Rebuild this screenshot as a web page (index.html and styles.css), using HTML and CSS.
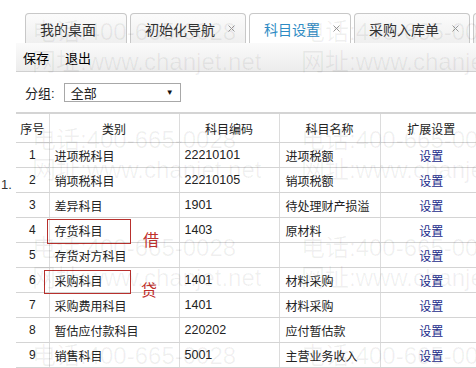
FILE: index.html
```html
<!DOCTYPE html>
<html lang="zh-CN">
<head>
  <meta charset="UTF-8">
  <title>科目设置</title>
  <link rel="stylesheet" href="styles.css">
</head>
<body>
  <div class="page">
    <!-- Tab bar -->
    <div class="tabs">
      <div class="tab">我的桌面<span class="close hidden"><svg width="7" height="7" viewBox="0 0 7 7"><path d="M0.5 0.5L6.5 6.5M6.5 0.5L0.5 6.5"/></svg></span></div>
      <div class="tab">初始化导航<span class="close"><svg width="7" height="7" viewBox="0 0 7 7"><path d="M0.5 0.5L6.5 6.5M6.5 0.5L0.5 6.5"/></svg></span></div>
      <div class="tab active">科目设置<span class="close"><svg width="7" height="7" viewBox="0 0 7 7"><path d="M0.5 0.5L6.5 6.5M6.5 0.5L0.5 6.5"/></svg></span></div>
      <div class="tab">采购入库单<span class="close"><svg width="7" height="7" viewBox="0 0 7 7"><path d="M0.5 0.5L6.5 6.5M6.5 0.5L0.5 6.5"/></svg></span></div>
      <div class="tab">销售出库单<span class="close"><svg width="7" height="7" viewBox="0 0 7 7"><path d="M0.5 0.5L6.5 6.5M6.5 0.5L0.5 6.5"/></svg></span></div>
    </div>

    <!-- Toolbar -->
    <div class="toolbar">
      <span class="tool">保存</span>
      <span class="tool">退出</span>
    </div>

    <!-- Filter -->
    <div class="filter">
      <span class="filter-label">分组:</span>
      <div class="select">
        <span>全部</span>
        <span class="arrow">&#9660;</span>
      </div>
    </div>

    <!-- Subject table -->
    <table class="grid">
      <colgroup>
        <col class="c-no"><col class="c-type"><col class="c-code"><col class="c-name"><col class="c-ext">
      </colgroup>
      <thead>
        <tr><th>序号</th><th>类别</th><th>科目编码</th><th>科目名称</th><th>扩展设置</th></tr>
      </thead>
      <tbody>
        <tr><td class="no">1</td><td>进项税科目</td><td class="code">22210101</td><td>进项税额</td><td class="ext"><a href="#">设置</a></td></tr>
        <tr><td class="no">2</td><td>销项税科目</td><td class="code">22210105</td><td>销项税额</td><td class="ext"><a href="#">设置</a></td></tr>
        <tr><td class="no">3</td><td>差异科目</td><td class="code">1901</td><td>待处理财产损溢</td><td class="ext"><a href="#">设置</a></td></tr>
        <tr><td class="no">4</td><td>存货科目</td><td class="code">1403</td><td>原材料</td><td class="ext"><a href="#">设置</a></td></tr>
        <tr><td class="no">5</td><td>存货对方科目</td><td class="code"></td><td></td><td class="ext"><a href="#">设置</a></td></tr>
        <tr><td class="no">6</td><td>采购科目</td><td class="code">1401</td><td>材料采购</td><td class="ext"><a href="#">设置</a></td></tr>
        <tr><td class="no">7</td><td>采购费用科目</td><td class="code">1401</td><td>材料采购</td><td class="ext"><a href="#">设置</a></td></tr>
        <tr><td class="no">8</td><td>暂估应付款科目</td><td class="code">220202</td><td>应付暂估款</td><td class="ext"><a href="#">设置</a></td></tr>
        <tr><td class="no">9</td><td>销售科目</td><td class="code">5001</td><td>主营业务收入</td><td class="ext"><a href="#">设置</a></td></tr>
      </tbody>
    </table>

    <!-- Annotations drawn over the screenshot -->
    <span class="note-num">1.</span>
    <div class="mark mark-debit"></div>
    <div class="mark mark-credit"></div>
    <span class="note note-debit">借</span>
    <span class="note note-credit">贷</span>

    <!-- Watermark -->
    <div class="watermark">
      <div class="wm"><p>电话:400-665-0028</p><p>网址:www.chanjet.net</p></div>
      <div class="wm"><p>电话:400-665-0028</p><p>网址:www.chanjet.net</p></div>
      <div class="wm"><p>电话:400-665-0028</p><p>网址:www.chanjet.net</p></div>
      <div class="wm"><p>电话:400-665-0028</p><p>网址:www.chanjet.net</p></div>
      <div class="wm"><p>电话:400-665-0028</p><p>网址:www.chanjet.net</p></div>
      <div class="wm"><p>电话:400-665-0028</p><p>网址:www.chanjet.net</p></div>
      <div class="wm"><p>电话:400-665-0028</p><p>网址:www.chanjet.net</p></div>
      <div class="wm"><p>电话:400-665-0028</p><p>网址:www.chanjet.net</p></div>
    </div>
  </div>
</body>
</html>
```

FILE: styles.css
```css
/* Page */
body {
  margin: 0;
  background: #fff;
  font-family: "Liberation Sans", Arial, "Noto Sans CJK SC", sans-serif;
  color: #222;
}

.page {
  position: relative;
  width: 476px;
  height: 368px;
  overflow: hidden;
}

/* Tab bar */
.tabs {
  display: flex;
  gap: 3px;
  padding: 13px 0 0 25px;
  height: 30px;
  white-space: nowrap;
}

.tab {
  flex-shrink: 0;
  display: flex;
  align-items: center;
  gap: 13px;
  height: 29px;
  padding: 0 10px 0 14px;
  border: 1px solid #c8c8c8;
  border-bottom: none;
  border-radius: 4px 4px 0 0;
  background: linear-gradient(#fbfbfb, #efefef);
  font-size: 14px;
  color: #333;
}

.tab.active {
  background: #fff;
  color: #2e8bc4;
}

.close {
  display: flex;
}

.close svg path {
  stroke: #9a9a9a;
  stroke-width: 1;
  fill: none;
}

.close.hidden {
  visibility: hidden;
}

/* Toolbar */
.toolbar {
  display: flex;
  gap: 16px;
  margin-left: 16px;
  height: 28px;
  padding-left: 7px;
  align-items: center;
  background: linear-gradient(#fafafa, #ececec);
  border-bottom: 1px solid #d0d0d0;
  font-size: 13px;
  color: #000;
}

/* Filter row */
.filter {
  display: flex;
  align-items: center;
  gap: 9px;
  height: 40px;
  padding-left: 25px;
  font-size: 13px;
  color: #222;
}

.select {
  display: flex;
  justify-content: space-between;
  align-items: center;
  width: 103px;
  height: 17px;
  padding: 0 6px 0 6px;
  border: 1px solid #a8a8a8;
  background: #fff;
  font-size: 13px;
}

.select .arrow {
  font-size: 8px;
  color: #111;
}

/* Table */
.grid {
  margin-left: 16px;
  width: 466px;
  border-collapse: collapse;
  table-layout: fixed;
  font-size: 12px;
  border-top: 2px solid #d4d4d4;
}

.c-no { width: 33px; }
.c-type { width: 130px; }
.c-code { width: 100px; }
.c-name { width: 101px; }
.c-ext { width: 102px; }

.grid th {
  height: 28px;
  font-weight: normal;
  color: #222;
  border-left: 1px solid #dcdcdc;
  border-bottom: 1px solid #d4d4d4;
  padding: 0;
}

.grid td {
  height: 24px;
  padding: 0 0 0 5px;
  border-left: 1px solid #dcdcdc;
  border-bottom: 1px solid #d4d4d4;
  color: #222;
  white-space: nowrap;
}

.grid th:first-child,
.grid td:first-child {
  border-left: none;
}

.grid td.no {
  padding: 0;
  text-align: center;
}

.grid td.code {
  font-size: 12.5px;
}

.grid td:nth-child(4) {
  padding-left: 6px;
}

.grid td.ext {
  padding: 0;
  text-align: center;
}

.grid td.ext a {
  color: #1b2a8a;
  text-decoration: none;
}

/* Annotations */
.note-num {
  position: absolute;
  left: 1px;
  top: 177px;
  font-size: 13px;
  color: #333;
}

.mark {
  position: absolute;
  border: 1px solid #b8302d;
}

.mark-debit {
  left: 47px;
  top: 219px;
  width: 82px;
  height: 23px;
}

.mark-credit {
  left: 44px;
  top: 270px;
  width: 85px;
  height: 22px;
}

.note {
  position: absolute;
  font-size: 16px;
  color: #c0302c;
}

.note-debit {
  left: 143px;
  top: 227px;
}

.note-credit {
  left: 141px;
  top: 277px;
}

/* Watermark */
.watermark {
  position: absolute;
  inset: 0;
  display: grid;
  grid-template-columns: repeat(2, 269px);
  grid-auto-rows: 108px;
  padding: 17px 0 0 32px;
  pointer-events: none;
}

.wm p {
  margin: 0;
  height: 30px;
  line-height: 30px;
  font-size: 24px;
  white-space: nowrap;
  color: rgba(0, 0, 0, 0.06);
}
```
